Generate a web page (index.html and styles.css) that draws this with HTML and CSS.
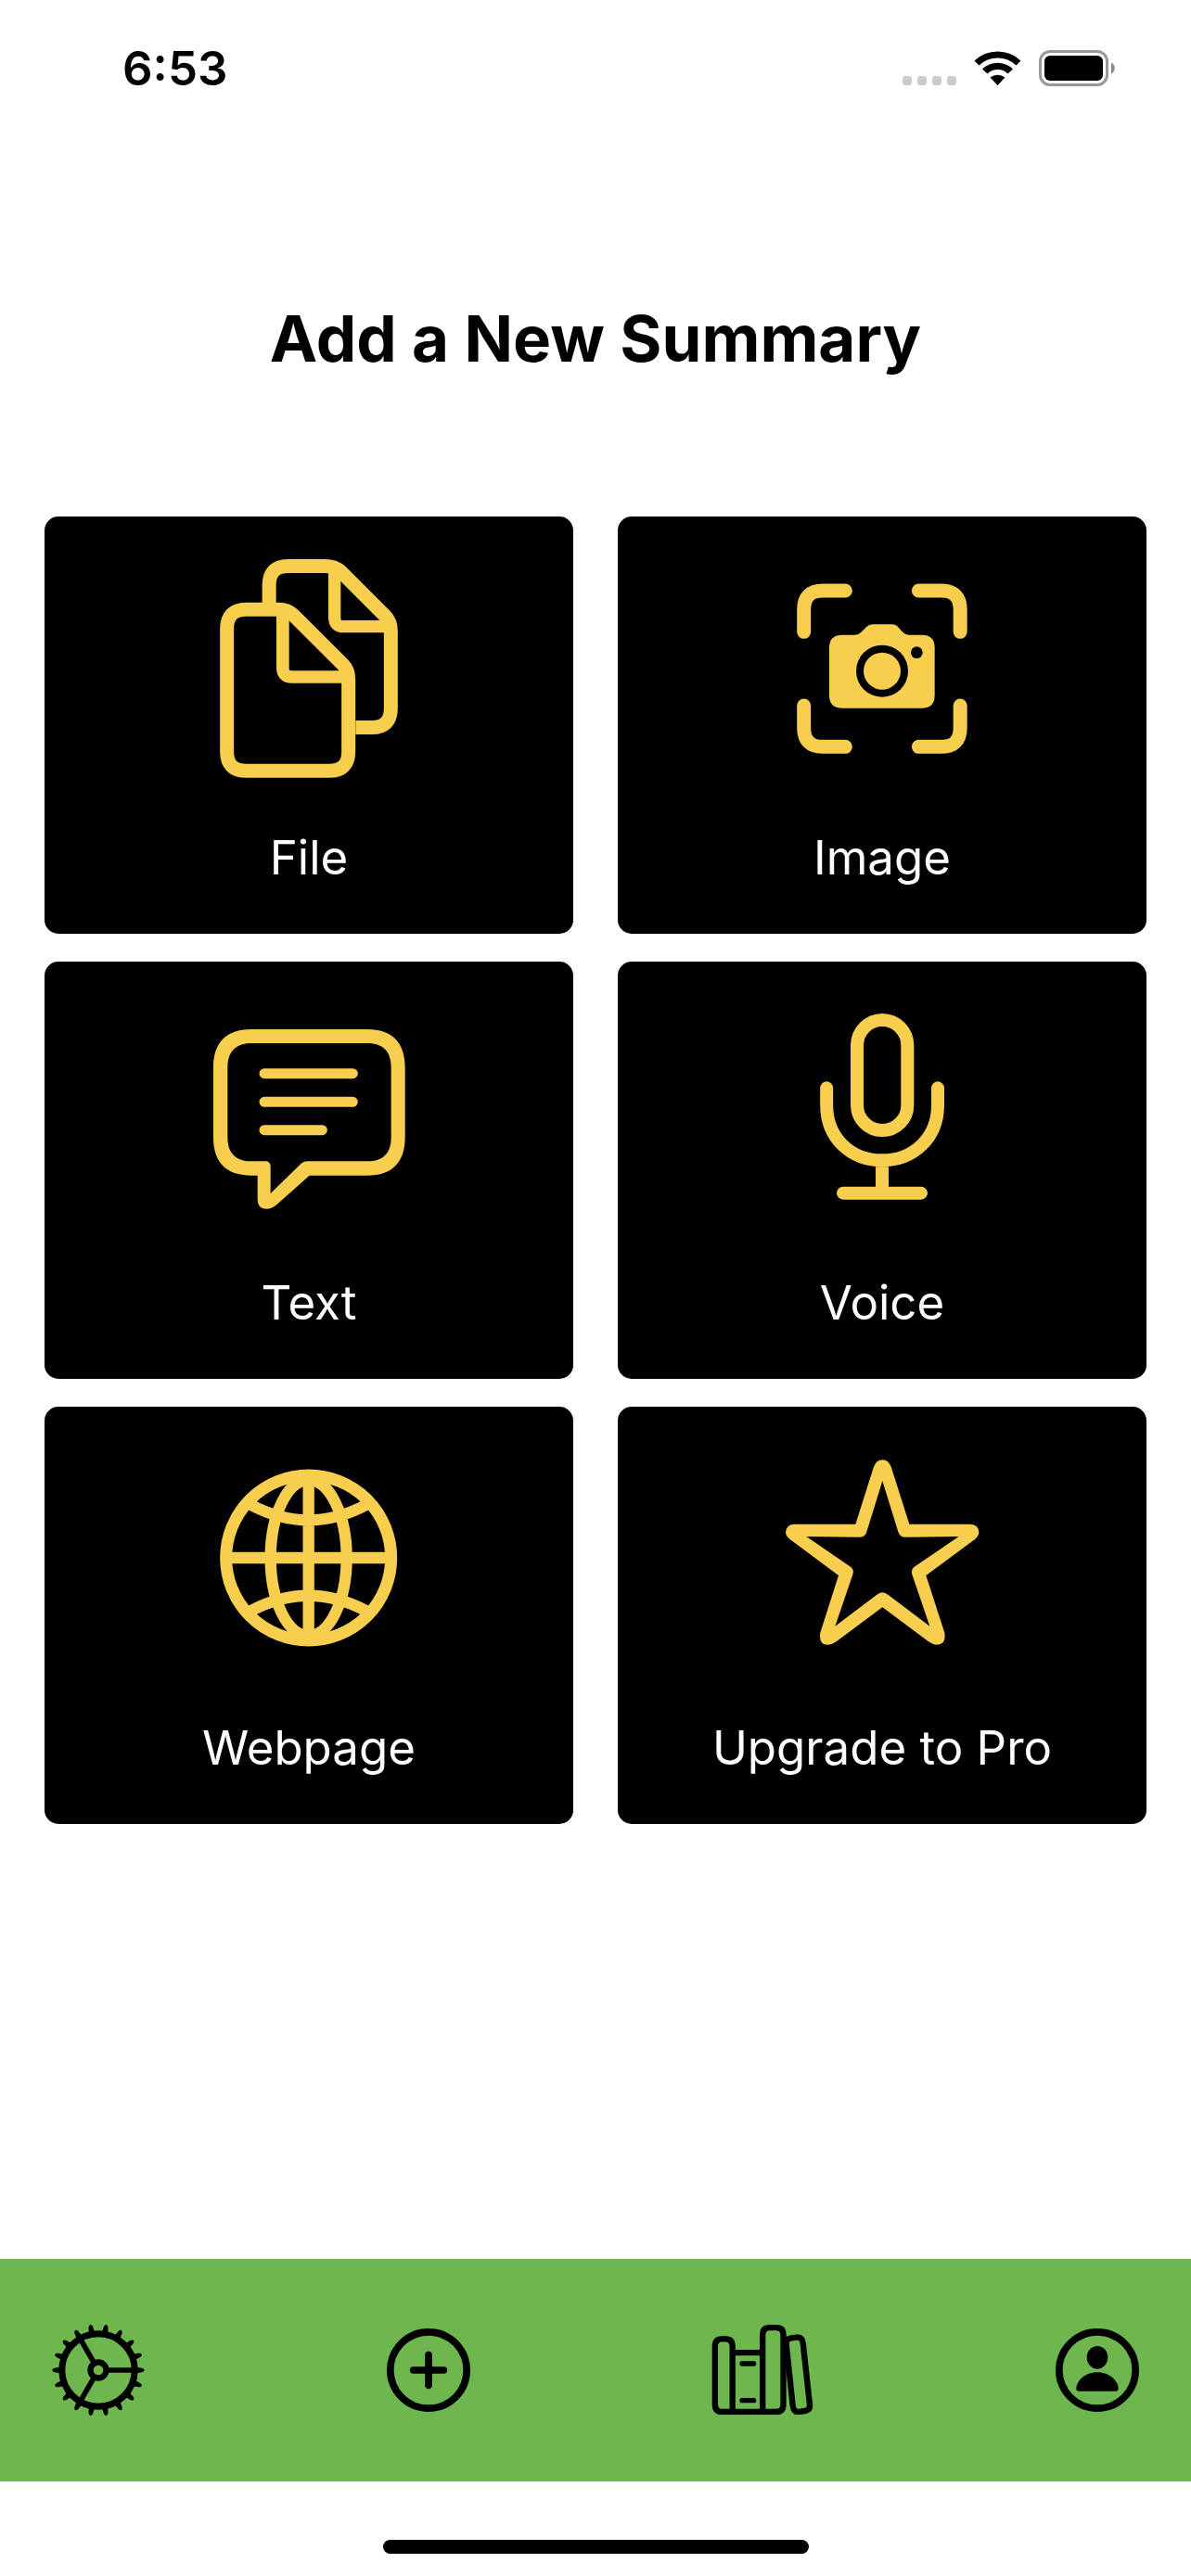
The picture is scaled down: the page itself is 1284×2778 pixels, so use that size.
FILE: index.html
```html
<!DOCTYPE html>
<html lang="en">
<head>
<meta charset="utf-8">
<meta name="viewport" content="width=device-width, initial-scale=1">
<title>Add a New Summary</title>
<link rel="stylesheet" href="styles.css">
</head>
<body>
<div class="screen">
  <header class="status">
    <time class="clock">6:53</time>
    <svg class="status-icons" width="232" height="42" viewBox="0 0 232 42" aria-hidden="true">
      <g fill="#cbcbcb">
        <rect x="0" y="29" width="10" height="10" rx="3"/><rect x="16" y="29" width="10" height="10" rx="3"/>
        <rect x="32" y="29" width="10" height="10" rx="3"/><rect x="48" y="29" width="10" height="10" rx="3"/>
      </g>
      <path d="M77.500 12.500a36 36 0 0 1 50 0l-5 5a29 29 0 0 0-40 0zM86 21.500a23.500 23.500 0 0 1 33 0l-5.500 5a16 16 0 0 0-22 0zM94.500 30.500a13 13 0 0 1 16 0l-8 8.500z"/>
      <rect x="148.500" y="2.500" width="72" height="36" rx="10.500" fill="none" stroke="#999" stroke-width="3"/>
      <rect x="153" y="7" width="63" height="27" rx="6"/>
      <path d="M225 14.500c5 2 5 10 0 12z" fill="#888"/>
    </svg>
  </header>

  <main class="content">
    <h1 class="title">Add a New Summary</h1>
    <div class="grid">
      <button class="card" type="button">
        <svg class="card-icon" viewBox="-21 51 720 750" stroke-width="45" aria-hidden="true">
          <path d="M210.500 215V152Q210.500 91.500 272 91.500H390Q424 91.500 443 110L586 253Q604 271 604 302V552Q604 613.500 543 613.500H490"/>
          <path d="M422 100V257Q422 287 452 287H600" stroke-width="40"/>
          <path d="M74 294Q74 232 136 232H240Q271 232 289 250L449 410Q467 428 467 458V692Q467 754 405 754H136Q74 754 74 692Z"/>
          <path d="M254.500 240V420Q254.500 450 284 450H460" stroke-width="41"/>
        </svg>
        <span class="label">File</span>
      </button>
      <button class="card" type="button">
        <svg class="card-icon" viewBox="-27 -39 720 750" stroke-width="45" stroke-linecap="round" aria-hidden="true">
          <path d="M80 214V142Q80 81 141 81H214M451 81H524Q585.500 81 585.500 142V214M80 453V525Q80 586 141 586H214M451 586H524Q585.500 586 585.500 525V453"/>
          <path class="solid" d="M204 224H245Q257 224 265 215L280 200Q291 190 303 190H364Q377 190 386 200L400 215Q408 224 420 224H462Q503 224 503 265V420Q503 461 462 461H204Q162 461 162 420V265Q162 224 204 224Z"/>
          <circle class="hole" cx="333" cy="341" r="84"/>
          <circle class="solid" cx="333" cy="341" r="60"/>
          <circle class="hole" cx="445" cy="281" r="19"/>
        </svg>
        <span class="label">Image</span>
      </button>
      <button class="card" type="button">
        <svg class="card-icon" viewBox="9 -39 720 750" stroke-width="33" stroke-linecap="round" aria-hidden="true">
          <path class="solid" fill-rule="evenodd" d="M183 60H558C640 60 680 105 680 183V410C680 488 640 533 558 533H371L262 630Q248 641 232 641Q203 641 203 608V533H183C100 533 60 488 60 410V183C60 105 100 60 183 60ZM183 105C132 105 106 133 106 183V410C106 460 132 487 183 487H228Q245 487 245 504V591L338 500Q350 487 365 487H558C610 487 635 460 635 410V183C635 133 610 105 558 105Z"/>
          <path d="M225 203H511M225 295H511M225 386H412"/>
        </svg>
        <span class="label">Text</span>
      </button>
      <button class="card" type="button">
        <svg class="card-icon" viewBox="-87 21 720 750" stroke-width="42" stroke-linecap="round" aria-hidden="true">
          <rect x="192" y="90" width="163" height="357" rx="82"/>
          <path d="M93.500 310V365C93.500 470 170 544 273 544C376 544 453 470 453 365V310M273 544V650M147 650H399"/>
        </svg>
        <span class="label">Voice</span>
      </button>
      <button class="card" type="button">
        <svg class="card-icon" viewBox="-21 -39 720 750" stroke-width="37" aria-hidden="true">
          <circle cx="338" cy="330" r="267" stroke-width="39"/>
          <ellipse cx="338" cy="330" rx="123" ry="252"/>
          <path d="M338 70V590M78 330H598M150 158Q338 258 526 158M150 502Q338 402 526 502"/>
        </svg>
        <span class="label">Webpage</span>
      </button>
      <button class="card" type="button">
        <svg class="card-icon" viewBox="3 -9 720 750" aria-hidden="true">
          <path class="solid" fill-rule="evenodd" d="M335 68Q344 43 364 43Q384 43 393 68L451 251H648Q676 253 676 278Q676 291 655 306L505 417L565 602Q570 641 541 641Q527 641 512 630L364 520L216 630Q201 641 187 641Q157 641 163 602L222 417L73 306Q51 291 51 278Q53 251 80 251H277ZM364 111L313 276Q308 293 292 293L118 291L258 387Q274 397 268 414L211 581L345 480Q364 464 383 480L517 581L460 414Q455 397 470 387L611 291L436 293Q420 293 415 276Z"/>
        </svg>
        <span class="label">Upgrade to Pro</span>
      </button>
    </div>
  </main>

  <nav class="tabs">
    <a class="tab" href="#settings" aria-label="Settings">
      <svg width="100" height="100" viewBox="-150 -150 300 300">
        <defs>
          <path id="tooth" d="M116 -19L128 -9L141 -7Q149 -5 149 0Q149 5 141 7L128 9L116 19Z"/>
          <g id="teeth"><use href="#tooth"/><use href="#tooth" transform="rotate(20)"/><use href="#tooth" transform="rotate(40)"/><use href="#tooth" transform="rotate(60)"/><use href="#tooth" transform="rotate(80)"/><use href="#tooth" transform="rotate(100)"/></g>
        </defs>
        <use href="#teeth"/><use href="#teeth" transform="rotate(120)"/><use href="#teeth" transform="rotate(240)"/>
        <g fill="none" stroke="#000">
          <circle r="117.500" stroke-width="21"/>
          <circle r="25.500" stroke-width="19"/>
          <path d="M30 0H115M-15 -26L-57.500 -99.600M-15 26L-57.500 99.600" stroke-width="17"/>
        </g>
      </svg>
    </a>
    <a class="tab" href="#add" aria-label="Add summary">
      <svg width="90" height="90" viewBox="-135 -135 270 270" fill="none" stroke="#000" stroke-width="23" stroke-linecap="round">
        <circle r="123.500"/>
        <path d="M-49 0H49M0 -49V49"/>
      </svg>
    </a>
    <a class="tab" href="#library" aria-label="Library">
      <svg width="110" height="100" viewBox="46 258 330 300" fill="none" stroke="#000" stroke-width="19">
        <path d="M114 542V331Q114 307 92 307H80Q57.500 307 57.500 331V518Q57.500 542.500 80 542.500H256Q278.500 542.500 278.500 518V294Q278.500 270.500 256 270.500H234Q211.500 270.500 211.500 294V542M114 351.500H211.500"/>
        <path d="M145 387H183M145 506H183" stroke-width="16" stroke-linecap="round"/>
        <path d="M288 325Q286 306 304 304L322 302Q339 300 342 320L364 520Q366 538 348 540L329 542.500Q311 545 309 523Z"/>
      </svg>
    </a>
    <a class="tab" href="#profile" aria-label="Profile">
      <svg width="90" height="90" viewBox="-135 -135 270 270">
        <circle r="123.500" fill="none" stroke="#000" stroke-width="23"/>
        <ellipse cy="-41" rx="34" ry="37"/>
        <path d="M-59 68Q-68 68 -68 60C-68 35 -40 7 0 7C40 7 68 35 68 60Q68 68 59 68Z"/>
      </svg>
    </a>
  </nav>
  <div class="home"><span class="home-bar"></span></div>
</div>
</body>
</html>
```

FILE: styles.css
```css
* {
  box-sizing: border-box;
}

body {
  margin: 0;
  background: #fff;
  color: #000;
  font-family: Inter, "Liberation Sans", sans-serif;
}

.screen {
  display: flex;
  flex-direction: column;
  min-height: 100vh;
}

.status {
  display: flex;
  justify-content: space-between;
  align-items: center;
  padding: 44px 79px 40px 132px;
}

.clock {
  font-size: 51px;
  line-height: 60px;
  font-weight: 600;
}

.content {
  flex: 1;
  padding: 168px 48px 48px;
}

.title {
  margin: 0;
  text-align: center;
  font-size: 69px;
  line-height: 106px;
  font-weight: 700;
}

.grid {
  display: grid;
  grid-template-columns: 1fr 1fr;
  gap: 30px 48px;
  margin-top: 139px;
}

.card {
  display: flex;
  flex-direction: column;
  align-items: center;
  padding: 40px 0 50px;
  border: 0;
  border-radius: 15px;
  background: #000;
  color: #fff;
  font: inherit;
}

.card-icon {
  width: 240px;
  height: 250px;
  fill: none;
  stroke: #f8ce4e;
}

.solid {
  fill: #f8ce4e;
  stroke: none;
}

.hole {
  fill: #000;
  stroke: none;
}

.label {
  margin-top: 46px;
  font-size: 51px;
  line-height: 64px;
}

.tabs {
  display: flex;
  justify-content: space-between;
  align-items: center;
  padding: 70px 56px;
  background: #6db74e;
}

.tab {
  display: flex;
}

.home {
  display: flex;
  justify-content: center;
  padding: 63px 0 24px;
}

.home-bar {
  width: 459px;
  height: 15px;
  border-radius: 8px;
  background: #000;
}
```
